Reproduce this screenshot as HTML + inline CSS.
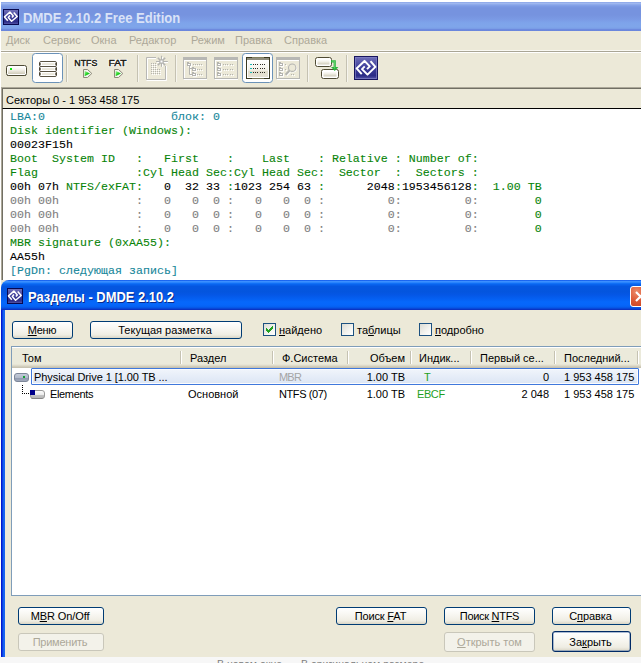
<!DOCTYPE html>
<html>
<head>
<meta charset="utf-8">
<title>DMDE</title>
<style>
html,body{margin:0;padding:0;}html{overflow:hidden;width:641px;height:663px;}
body{width:641px;height:663px;overflow:hidden;background:#fff;position:relative;font-family:"Liberation Sans",sans-serif;font-size:11px;color:#000;}
.abs{position:absolute;}
.t{position:absolute;white-space:nowrap;line-height:13px;font-size:11px;}
u{text-decoration:underline;text-underline-offset:1px;}
/* main window */
#mtitle{left:1px;top:2px;width:640px;height:29px;background:linear-gradient(to bottom,#8aa5e8 0,#9fb7ef 1.5px,#8eaaeb 2.5px,#7d9be5 4px,#7693df 6px,#7693df 13px,#7a99e4 17px,#7ea4ea 21px,#7fa6ea 25px,#7a9de6 26.5px,#6d8ade 27.5px,#6985dc 29px);}
#mtitle .txt{left:22px;top:8px;font-size:14px;line-height:16px;font-weight:bold;color:#d9e2f7;white-space:nowrap;transform:scaleX(0.931);transform-origin:0 0;}
#menubar{left:1px;top:31px;width:640px;height:20px;background:#ece9d8;}
.mi{position:absolute;top:3px;font-size:11px;line-height:13px;color:#aca899;white-space:nowrap;}
#tb{left:1px;top:52px;width:640px;height:35px;background:#ece9d8;border-top:1px solid #fff;box-sizing:border-box;}
.sep{position:absolute;top:55px;width:1px;height:27px;background:#c5c2b2;box-shadow:1px 0 0 #f6f5ee;}
.selbtn{position:absolute;top:53px;height:30px;box-sizing:border-box;border:1px solid #6b92b8;border-radius:3.5px;background:#fff;}
/* status */
#st{left:1px;top:87px;width:640px;height:22px;background:#ece9d8;box-sizing:border-box;border-top:1px solid #aca899;border-left:1px solid #aca899;}
#st .in{position:absolute;left:0;top:0;right:0;bottom:0;border-top:1px solid #716f64;border-left:1px solid #716f64;border-bottom:1px solid #000;}
#ed{left:1px;top:109px;width:640px;height:172px;background:#fff;box-sizing:border-box;border-left:1px solid #aca899;}
#ed .in{position:absolute;left:0;top:0;bottom:0;width:1px;background:#716f64;}
pre{margin:0;position:absolute;left:10px;top:110px;font-family:"Liberation Mono",monospace;font-size:11.6px;line-height:14px;letter-spacing:0.04px;color:#000;-webkit-text-stroke:0.1px currentColor;}
.g{color:#088408;}
.c{color:#16879a;}
.y{color:#808080;}
/* dialog */
#dlg{left:1px;top:280px;width:660px;height:377px;background:#ece9d8;}
#dtitle{left:0;top:0;width:660px;height:30px;border-radius:8px 8px 0 0;background:linear-gradient(to bottom,#0a52ea 0,#3b8fff 1.5px,#2a84fc 2.5px,#1070f6 3.5px,#0863ee 4.5px,#0456e0 6.5px,#0455de 12px,#0557e6 15px,#0560f2 19px,#0668fb 22px,#0666fa 25px,#0560f0 27px,#0848d8 28.5px,#0a34c4 29.5px,#0a30c0 30px);}
#dtitle .txt{left:27px;top:9px;font-size:14px;line-height:16px;font-weight:bold;color:#fff;white-space:nowrap;text-shadow:1px 1px 0 #0a2a8c;transform:scaleX(0.923);transform-origin:0 0;}
#dl{left:0;top:30px;width:4px;height:347px;background:linear-gradient(to right,#0019cf 0,#0019cf 1px,#0a3ee2 1.5px,#1560f0 2.5px,#1a66f2 4px);}
.btn{position:absolute;box-sizing:border-box;border:1px solid #003c74;border-radius:3px;background:linear-gradient(to bottom,#ffffff 0,#f8f7f2 40%,#efede3 80%,#d9d5c6 100%);text-align:center;font-size:11px;line-height:13px;color:#000;white-space:nowrap;}
.btn span{position:relative;display:inline-block;}
.btn.dis{border-color:#c9c7ba;background:#f3f2ea;color:#aca899;}
.btn.def{border-color:#002a66;box-shadow:inset 0 0 0 0.5px #5a7aa8;}
.cb{position:absolute;width:13px;height:13px;box-sizing:border-box;border:1px solid #1c5180;background:linear-gradient(135deg,#dcdcd4 0,#f4f4f0 60%,#fff 100%);}
#lv{left:10px;top:66px;width:650px;height:250px;background:#fff;box-sizing:border-box;border:1px solid #7f9db9;}
#lh{left:0;top:0;width:648px;height:21px;background:linear-gradient(to bottom,#fff 0,#fff 1px,#ebeadb 1px,#ebeadb 17px,#e3e0d0 18px,#d8d4c3 19px,#cbc7b6 20px,#c4c0ae 21px);}
.hs{position:absolute;top:4px;width:1px;height:13px;background:#c5c2b2;border-right:1px solid #fff;}
.ht{position:absolute;top:5px;font-size:11px;line-height:13px;white-space:nowrap;}
.ct{position:absolute;font-size:11px;line-height:13px;white-space:nowrap;}
#bot{left:0;top:657px;width:641px;height:6px;background:#f7f7f7;overflow:hidden;}
</style>
</head>
<body>
<!-- main window -->
<div id="mtitle" class="abs"><div class="abs txt">DMDE 2.10.2 Free Edition</div></div>
<div id="menubar" class="abs">
<span class="mi" style="left:5px">Диск</span>
<span class="mi" style="left:42px">Сервис</span>
<span class="mi" style="left:90px">Окна</span>
<span class="mi" style="left:128px">Редактор</span>
<span class="mi" style="left:190px">Режим</span>
<span class="mi" style="left:234px">Правка</span>
<span class="mi" style="left:283px">Справка</span>
</div>
<div class="abs" style="left:1px;top:50px;width:640px;height:1px;background:#f9f8f2"></div><div class="abs" style="left:1px;top:51px;width:640px;height:1px;background:#a9a595"></div>
<div id="tb" class="abs"></div>
<div class="selbtn" style="left:32px;width:31px"></div><div class="selbtn" style="left:242px;width:31px"></div>
<i class="sep" style="left:66px"></i><i class="sep" style="left:137px"></i><i class="sep" style="left:175px"></i><i class="sep" style="left:307px"></i><i class="sep" style="left:346px"></i>
<svg class="abs" style="left:0;top:0" width="641" height="100" viewBox="0 0 641 100">
<defs>
<linearGradient id="gd" x1="0" y1="0" x2="0" y2="1"><stop offset="0" stop-color="#ffffff"/><stop offset="0.45" stop-color="#f1efe6"/><stop offset="1" stop-color="#cfcbb9"/></linearGradient>
<linearGradient id="gl" x1="0" y1="0" x2="0" y2="1"><stop offset="0" stop-color="#6e6eb8"/><stop offset="0.5" stop-color="#3c3c98"/><stop offset="0.85" stop-color="#2b2b86"/><stop offset="1" stop-color="#5656a8"/></linearGradient>
<linearGradient id="gg" x1="0" y1="0" x2="1" y2="1"><stop offset="0" stop-color="#b8f5b0"/><stop offset="0.5" stop-color="#22d422"/><stop offset="1" stop-color="#0a9a0a"/></linearGradient>
<linearGradient id="gh" x1="0" y1="0" x2="1" y2="0"><stop offset="0" stop-color="#3f3d28"/><stop offset="0.5" stop-color="#a5a188"/><stop offset="1" stop-color="#3f3d28"/></linearGradient>
<g id="logo"><rect x="0" y="0" width="24" height="24" fill="#17155f"/><rect x="1" y="1" width="22" height="22" fill="url(#gl)"/><rect x="1.5" y="1.5" width="21" height="21" fill="none" stroke="#8080c4" stroke-width="1" opacity="0.7"/><path d="M7.75 18.2 L2.6 12.4 L10.5 4.9 L15.75 10.4 L13 13.15 M16.5 5.15 L21.4 10.9 L13.5 18.65 L8 13.15 L10.75 10.4" fill="none" stroke="#fff" stroke-width="2" stroke-linejoin="round"/></g>
<g id="logo16"><rect x="0" y="0" width="16" height="16" fill="#08084e"/><rect x="1" y="1" width="14" height="14" fill="url(#gl)"/><path d="M4.8 11.7 L1.5 7.9 L6.9 3.1 L10.3 6.9 L8.9 8.5 M10.7 3.4 L14.2 7.5 L8.6 12.3 L5.3 8.5 L6.9 6.6" fill="none" stroke="#fff" stroke-width="1.5" stroke-linejoin="round"/></g>
<g id="play"><path d="M0.5 0.5 H4.5 L8.8 4.5 L4.5 8.5 H0.5 Z" fill="#f4f4ee" stroke="#8c8a78" stroke-width="1"/><path d="M1.6 1.8 L7 4.5 L1.6 7.3 Z" fill="url(#gg)"/></g>
</defs>
<!-- drive icon -->
<rect x="6.5" y="65.5" width="20" height="10" rx="2" fill="#fff" stroke="#4d4a34" stroke-width="1"/>
<rect x="8" y="67" width="17" height="7" fill="url(#gd)"/>
<rect x="7" y="75" width="19" height="1" fill="#4d4a34" opacity="0.6"/>
<rect x="10" y="68" width="2" height="2" fill="#10e810"/>
<!-- disk stack -->
<g fill="#fff" stroke="#5a5343" stroke-width="1"><rect x="39.5" y="61.5" width="17" height="5" rx="1.5"/><rect x="39.5" y="66.5" width="17" height="5" rx="1.5"/><rect x="39.5" y="71.5" width="17" height="5" rx="1.5"/></g>
<g stroke="#4a4333" stroke-width="1.6"><path d="M39.9 63v2M39.9 68v2M39.9 73v2M56.1 63v2M56.1 68v2M56.1 73v2"/></g>
<g fill="#e4e0d0"><rect x="42" y="63.3" width="12.5" height="1.5"/><rect x="42" y="68.3" width="12.5" height="1.5"/><rect x="42" y="73.3" width="12.5" height="1.5"/></g>
<!-- NTFS / FAT -->
<g font-family="Liberation Sans, sans-serif" font-size="9.3" fill="#fff" stroke="#fff" stroke-width="2" stroke-opacity="0.8" stroke-linejoin="round"><text x="74.3" y="66" textLength="23" lengthAdjust="spacingAndGlyphs">NTFS</text><text x="108.6" y="66" textLength="18" lengthAdjust="spacingAndGlyphs">FAT</text></g>
<g font-family="Liberation Sans, sans-serif" font-size="9.3" fill="#1c1b12" stroke="#1c1b12" stroke-width="0.45"><text x="74.3" y="66" textLength="23" lengthAdjust="spacingAndGlyphs">NTFS</text><text x="108.6" y="66" textLength="18" lengthAdjust="spacingAndGlyphs">FAT</text></g>
<use href="#play" x="83" y="69"/><use href="#play" x="114" y="69"/>
<!-- grid/star disabled -->
<g fill="none" stroke="#fff" stroke-width="1"><path d="M156 58.5 H147.5 V79 M146.5 80.5 H166.5 V66"/></g>
<g fill="none" stroke="#b7b7b4" stroke-width="1"><path d="M156 57.5 H146.5 V79.5 H165.5 V66"/></g>
<g stroke="#fff" stroke-width="1"><path d="M162.5 57v10M157 62.5h11M158.6 58.3l7 7"/></g>
<g stroke="#b4b4b0" stroke-width="1.1"><path d="M161.5 55.8v11M156 61.5h11.8"/><path d="M157.8 57.8l7.4 7.4M165.2 57.8l-7.4 7.4" stroke-width="1.6"/></g>
<rect x="160" y="60" width="3" height="3" fill="#fff" stroke="#b4b4b0" stroke-width="1"/>
<g fill="#fff" transform="translate(1,1)"><rect x="151" y="63" width="1" height="1"/><rect x="153" y="63" width="1" height="1"/><rect x="155" y="63" width="1" height="1"/><rect x="151" y="65" width="1" height="1"/><rect x="153" y="65" width="1" height="1"/><rect x="155" y="65" width="1" height="1"/><rect x="151" y="67" width="1" height="1"/><rect x="153" y="67" width="1" height="1"/><rect x="155" y="67" width="1" height="1"/><rect x="151" y="69" width="1" height="1"/><rect x="153" y="69" width="1" height="1"/><rect x="155" y="69" width="1" height="1"/><rect x="157" y="69" width="1" height="1"/><rect x="159" y="69" width="1" height="1"/><rect x="151" y="71" width="1" height="1"/><rect x="153" y="71" width="1" height="1"/><rect x="155" y="71" width="1" height="1"/><rect x="157" y="71" width="1" height="1"/><rect x="159" y="71" width="1" height="1"/><rect x="151" y="73" width="1" height="1"/><rect x="153" y="73" width="1" height="1"/><rect x="155" y="73" width="1" height="1"/><rect x="157" y="73" width="1" height="1"/><rect x="159" y="73" width="1" height="1"/></g>
<g fill="#b4b4b0"><rect x="151" y="63" width="1" height="1"/><rect x="153" y="63" width="1" height="1"/><rect x="155" y="63" width="1" height="1"/><rect x="151" y="65" width="1" height="1"/><rect x="153" y="65" width="1" height="1"/><rect x="155" y="65" width="1" height="1"/><rect x="151" y="67" width="1" height="1"/><rect x="153" y="67" width="1" height="1"/><rect x="155" y="67" width="1" height="1"/><rect x="151" y="69" width="1" height="1"/><rect x="153" y="69" width="1" height="1"/><rect x="155" y="69" width="1" height="1"/><rect x="157" y="69" width="1" height="1"/><rect x="159" y="69" width="1" height="1"/><rect x="151" y="71" width="1" height="1"/><rect x="153" y="71" width="1" height="1"/><rect x="155" y="71" width="1" height="1"/><rect x="157" y="71" width="1" height="1"/><rect x="159" y="71" width="1" height="1"/><rect x="151" y="73" width="1" height="1"/><rect x="153" y="73" width="1" height="1"/><rect x="155" y="73" width="1" height="1"/><rect x="157" y="73" width="1" height="1"/><rect x="159" y="73" width="1" height="1"/></g>
<!-- tree disabled -->
<g id="frm"><rect x="184.5" y="60.5" width="22" height="19" fill="none" stroke="#fff" stroke-width="1"/><rect x="183.5" y="57.5" width="23" height="21" fill="none" stroke="#b7b7b4" stroke-width="1"/><rect x="183" y="57" width="24" height="3" fill="#b7b7b4"/></g>
<g id="fld"><path d="M191.5 63.5v3.2h-3.5" fill="none" stroke="#fff" stroke-width="1"/><rect x="187.5" y="63.5" width="3" height="2" fill="#fff" stroke="#b4b4b0" stroke-width="1"/><rect x="187" y="62" width="2" height="1" fill="#b4b4b0"/></g>
<path d="M190.5 67v8.5h2" stroke="#fff" stroke-width="1" fill="none"/>
<path d="M189.5 66v8.5h2.5M189.5 68.5h2.5" fill="none" stroke="#b4b4b0" stroke-width="1"/>
<use href="#fld" x="5" y="5"/><use href="#fld" x="5" y="10"/>
<g fill="#fff" transform="translate(1,1)"><rect x="193" y="64" width="1" height="1"/><rect x="195" y="64" width="1" height="1"/><rect x="197" y="64" width="1" height="1"/><rect x="199" y="64" width="1" height="1"/><rect x="201" y="64" width="1" height="1"/><rect x="197" y="69" width="1" height="1"/><rect x="199" y="69" width="1" height="1"/><rect x="201" y="69" width="1" height="1"/><rect x="197" y="74" width="1" height="1"/><rect x="199" y="74" width="1" height="1"/><rect x="201" y="74" width="1" height="1"/></g><g fill="#b4b4b0"><rect x="193" y="64" width="1" height="1"/><rect x="195" y="64" width="1" height="1"/><rect x="197" y="64" width="1" height="1"/><rect x="199" y="64" width="1" height="1"/><rect x="201" y="64" width="1" height="1"/><rect x="197" y="69" width="1" height="1"/><rect x="199" y="69" width="1" height="1"/><rect x="201" y="69" width="1" height="1"/><rect x="197" y="74" width="1" height="1"/><rect x="199" y="74" width="1" height="1"/><rect x="201" y="74" width="1" height="1"/></g>
<!-- list disabled -->
<use href="#frm" x="31" y="0"/>
<use href="#fld" x="30" y="0"/><use href="#fld" x="30" y="5"/><use href="#fld" x="30" y="10"/>
<g fill="#fff" transform="translate(1,1)"><rect x="223" y="64" width="1" height="1"/><rect x="225" y="64" width="1" height="1"/><rect x="227" y="64" width="1" height="1"/><rect x="230" y="64" width="1" height="1"/><rect x="232" y="64" width="1" height="1"/><rect x="223" y="69" width="1" height="1"/><rect x="225" y="69" width="1" height="1"/><rect x="227" y="69" width="1" height="1"/><rect x="230" y="69" width="1" height="1"/><rect x="232" y="69" width="1" height="1"/><rect x="223" y="74" width="1" height="1"/><rect x="225" y="74" width="1" height="1"/><rect x="227" y="74" width="1" height="1"/><rect x="230" y="74" width="1" height="1"/><rect x="232" y="74" width="1" height="1"/></g><g fill="#b4b4b0"><rect x="223" y="64" width="1" height="1"/><rect x="225" y="64" width="1" height="1"/><rect x="227" y="64" width="1" height="1"/><rect x="230" y="64" width="1" height="1"/><rect x="232" y="64" width="1" height="1"/><rect x="223" y="69" width="1" height="1"/><rect x="225" y="69" width="1" height="1"/><rect x="227" y="69" width="1" height="1"/><rect x="230" y="69" width="1" height="1"/><rect x="232" y="69" width="1" height="1"/><rect x="223" y="74" width="1" height="1"/><rect x="225" y="74" width="1" height="1"/><rect x="227" y="74" width="1" height="1"/><rect x="230" y="74" width="1" height="1"/><rect x="232" y="74" width="1" height="1"/></g>
<!-- view icon (selected) -->
<linearGradient id="gv" x1="0" y1="0" x2="0" y2="1"><stop offset="0" stop-color="#ffffff"/><stop offset="0.5" stop-color="#f6f4ec"/><stop offset="0.62" stop-color="#efece0"/><stop offset="0.66" stop-color="#e3dfcd"/><stop offset="1" stop-color="#e6e2d2"/></linearGradient>
<rect x="246.5" y="57.5" width="23" height="21" fill="#fff" stroke="#3b3a22" stroke-width="1"/>
<rect x="248" y="60" width="20" height="17" fill="url(#gv)"/>
<rect x="247" y="58" width="22" height="2" fill="#8f8d7c"/>
<rect x="252" y="57" width="12" height="1" fill="#8a8866" opacity="0.9"/><rect x="252" y="78" width="12" height="1" fill="#8a8866" opacity="0.7"/>
<g fill="#19b9b4"><rect x="250" y="64" width="2" height="1"/><rect x="250" y="68" width="2" height="1"/><rect x="250" y="72" width="2" height="1"/></g>
<g stroke="#2e2b24" stroke-width="1" stroke-dasharray="1 1"><path d="M253 64.5h5M260 64.5h5M253 68.5h5M260 68.5h5M253 72.5h5M260 72.5h5"/></g>
<!-- magnifier disabled -->
<use href="#frm" x="93" y="0"/>
<use href="#fld" x="92" y="0"/><use href="#fld" x="92" y="5"/><use href="#fld" x="92" y="10"/>
<g fill="#fff" transform="translate(1,1)"><rect x="285" y="64" width="1" height="1"/><rect x="285" y="69" width="1" height="1"/><rect x="291" y="74" width="1" height="1"/><rect x="293" y="74" width="1" height="1"/></g><g fill="#b4b4b0"><rect x="285" y="64" width="1" height="1"/><rect x="285" y="69" width="1" height="1"/><rect x="291" y="74" width="1" height="1"/><rect x="293" y="74" width="1" height="1"/></g>
<circle cx="293" cy="68.5" r="3.7" fill="none" stroke="#fff" stroke-width="1"/>
<circle cx="292.2" cy="67.7" r="3.7" fill="#ece9d8" stroke="#b4b4b0" stroke-width="1.1"/>
<path d="M290.3 71.7L286.6 75.6" stroke="#fff" stroke-width="1.6"/>
<path d="M289.4 70.8L285.6 74.8" stroke="#b4b4b0" stroke-width="2"/>
<!-- copy icon -->
<linearGradient id="go" x1="0" y1="0" x2="1" y2="0"><stop offset="0" stop-color="#4a4630"/><stop offset="0.5" stop-color="#8a8468"/><stop offset="1" stop-color="#4a4630"/></linearGradient>
<rect x="315.5" y="57.5" width="16" height="9" rx="2" fill="#fff" stroke="#4f4b34" stroke-width="1"/>
<rect x="317.5" y="59.5" width="12" height="5" fill="url(#gd)"/>
<rect x="321.5" y="69.5" width="17" height="9" rx="2" fill="#fff" stroke="#4f4b34" stroke-width="1"/>
<rect x="323.5" y="71.5" width="13" height="5" fill="url(#gd)"/>
<path d="M331 61.4 H334.7 V67.5" fill="none" stroke="#2cb53c" stroke-width="2.2"/><path d="M331 67 h7.4 l-3.7 3.9z" fill="#2cb53c"/>
<path d="M332 61.2 H334.6 V68.5" fill="none" stroke="#7fe08a" stroke-width="0.7" opacity="0.8"/>
<!-- logo -->
<use href="#logo" x="354" y="56"/>
<use href="#logo16" x="3" y="9"/>
</svg>
<div id="st" class="abs"><div class="in"></div><div class="t" style="left:4px;top:6px">Секторы 0 - 1 953 458 175</div></div>
<div id="ed" class="abs"><div class="in"></div></div>
<pre><span class="c">LBA:0                  блок: 0</span>
<span class="g">Disk identifier (Windows):</span>
00023F15h
<span class="g">Boot  System ID   :   First    :    Last    : Relative : Number of:</span>
<span class="g">Flag              :Cyl Head Sec:Cyl Head Sec:  Sector  :  Sectors :</span>
00h 07h<span class="g"> NTFS/exFAT:</span>   0  32 33 <span class="g">:</span>1023 254 63 <span class="g">:</span>      2048<span class="g">:</span>1953456128<span class="g">:  1.00 TB</span>
<span class="y">00h 00h           :   0   0  0 :   0   0  0 :         0:         0:</span><span class="g">        0</span>
<span class="y">00h 00h           :   0   0  0 :   0   0  0 :         0:         0:</span><span class="g">        0</span>
<span class="y">00h 00h           :   0   0  0 :   0   0  0 :         0:         0:</span><span class="g">        0</span>
<span class="g">MBR signature (0xAA55):</span>
AA55h
<span class="c">[PgDn: следующая запись]</span></pre>

<!-- dialog -->
<div id="dlg" class="abs">
 <div id="dtitle" class="abs"><svg class="abs" style="left:6px;top:8px" width="16" height="16" viewBox="0 0 16 16"><use href="#logo16"/></svg><div class="abs txt">Разделы - DMDE 2.10.2</div>
  <div class="abs" id="xb" style="left:629px;top:6px;width:21px;height:21px;box-sizing:border-box;border:1px solid #fff;border-radius:3px;background:radial-gradient(circle at 30% 25%,#ec8c6c 0,#dd5a36 45%,#c43c1a 100%);"></div>
  <svg class="abs" style="left:629px;top:6px" width="21" height="21" viewBox="0 0 21 21"><path d="M6 6l9 9M15 6l-9 9" stroke="#fff" stroke-width="2.2" stroke-linecap="butt"/></svg></div>
 <div id="dl" class="abs"></div>
 <div class="btn" style="left:11px;top:41px;width:61px;height:18px;"><span style="top:2px;left:-0.5px;letter-spacing:-0.3px"><u>М</u>еню</span></div>
 <div class="btn" style="left:89px;top:41px;width:152px;height:18px;"><span style="top:2px;left:-1px">Текущая разметка</span></div>
 <div class="cb" style="left:262px;top:43px"><svg style="position:absolute;left:2px;top:2px" width="7" height="7" viewBox="0 0 7 7" shape-rendering="crispEdges"><path d="M0 2h1v3h-1zM1 3h1v3h-1zM2 4h1v3h-1zM3 3h1v3h-1zM4 2h1v3h-1zM5 1h1v3h-1zM6 0h1v3h-1z" fill="#21a121"/></svg></div><div class="t" style="left:278px;top:44px"><u>н</u>айдено</div>
 <div class="cb" style="left:340px;top:43px"></div><div class="t" style="left:356px;top:44px">та<u>б</u>лицы</div>
 <div class="cb" style="left:418px;top:43px"></div><div class="t" style="left:434px;top:44px"><u>п</u>одробно</div>
 <div id="lv" class="abs">
  <div id="lh" class="abs">
   <span class="ht" style="left:10px">Том</span>
   <span class="ht" style="left:178px">Раздел</span>
   <span class="ht" style="left:270px">Ф.Система</span>
   <span class="ht" style="right:255px">Объем</span>
   <span class="ht" style="left:407px">Индик...</span>
   <span class="ht" style="left:468px">Первый се...</span>
   <span class="ht" style="left:552px">Последний...</span>
   <i class="hs" style="left:168px"></i><i class="hs" style="left:260px"></i><i class="hs" style="left:335px"></i><i class="hs" style="left:398px"></i><i class="hs" style="left:458px"></i><i class="hs" style="left:542px"></i><i class="hs" style="left:625px"></i>
  </div>
  <!-- row 1 -->
  <div class="abs" id="sel" style="left:19px;top:21px;width:608px;height:17px;box-sizing:border-box;border:1px solid #3f78dc;border-radius:1px;background:linear-gradient(to bottom,#f1f5fb 0,#e6edf8 50%,#dbe5f4 100%);box-shadow:inset 0 0 0 1px #fbfcfe;"></div>
  <svg class="abs" style="left:0;top:20px" width="40" height="36" viewBox="0 20 40 36">
   <defs><linearGradient id="gdr" x1="0" y1="0" x2="0" y2="1"><stop offset="0" stop-color="#c6cddb"/><stop offset="0.5" stop-color="#b2bbcb"/><stop offset="0.62" stop-color="#929cb1"/><stop offset="1" stop-color="#a4adbf"/></linearGradient>
   <linearGradient id="gpr" x1="0" y1="0" x2="0" y2="1"><stop offset="0" stop-color="#ffffff"/><stop offset="0.5" stop-color="#ececec"/><stop offset="0.6" stop-color="#c4c4c4"/><stop offset="1" stop-color="#b4b4b4"/></linearGradient></defs>
   <rect x="2.5" y="26.5" width="14" height="8" rx="2.5" fill="url(#gdr)" stroke="#7d8799" stroke-width="1"/>
   <rect x="11" y="29" width="2" height="2" fill="#12a032"/>
   <g fill="#000" shape-rendering="crispEdges"><rect x="10" y="38" width="1" height="1"/><rect x="10" y="40" width="1" height="1"/><rect x="10" y="42" width="1" height="1"/><rect x="10" y="44" width="1" height="1"/><rect x="10" y="46" width="1" height="1"/><rect x="12" y="46" width="1" height="1"/><rect x="14" y="46" width="1" height="1"/><rect x="16" y="46" width="1" height="1"/></g>
   <path d="M18.5 43.5 H30 Q32.5 43.5 32.5 46 V49 Q32.5 51.5 30 51.5 H21 Q18.5 51.5 18.5 49 Z" fill="url(#gpr)" stroke="#9a9a9a" stroke-width="1"/>
   <path d="M19.5 51.5 H30.5" stroke="#868686" stroke-width="1"/>
   <rect x="18" y="43" width="5" height="5" fill="#00008b" shape-rendering="crispEdges"/>
  </svg>
  <span class="ct" style="left:22px;top:24px;letter-spacing:-0.07px">Physical Drive 1 [1.00 TB ...</span>
  <span class="ct" style="left:267px;top:24px;color:#a5a5a5;letter-spacing:-0.8px">MBR</span>
  <span class="ct" style="right:255px;top:24px">1.00 TB</span>
  <span class="ct" style="left:412px;top:24px;color:#1f9f1f">T</span>
  <span class="ct" style="right:111px;top:24px">0</span>
  <span class="ct" style="left:552px;top:24px">1 953 458 175</span>
  <!-- row 2 -->
  <span class="ct" style="left:38px;top:41px;letter-spacing:-0.35px">Elements</span>
  <span class="ct" style="left:176px;top:41px">Основной</span>
  <span class="ct" style="left:267px;top:41px;letter-spacing:-0.4px">NTFS (07)</span>
  <span class="ct" style="right:255px;top:41px">1.00 TB</span>
  <span class="ct" style="left:405px;top:41px;color:#1f9f1f;letter-spacing:-0.4px">EBCF</span>
  <span class="ct" style="right:111px;top:41px">2 048</span>
  <span class="ct" style="left:552px;top:41px">1 953 458 175</span>
 </div>
 <div class="btn" style="left:17px;top:327px;width:86px;height:18px;"><span style="top:2px;left:-1px;letter-spacing:-0.1px">M<u>B</u>R On/Off</span></div>
 <div class="btn dis" style="left:17px;top:353px;width:86px;height:18px;"><span style="top:2px;left:-1px;letter-spacing:-0.25px">Применить</span></div>
 <div class="btn" style="left:335px;top:327px;width:91px;height:18px;"><span style="top:2px;left:-1px;letter-spacing:-0.15px">Поиск <u>F</u>AT</span></div>
 <div class="btn" style="left:443px;top:327px;width:91px;height:18px;"><span style="top:2px;letter-spacing:-0.3px">Поиск <u>N</u>TFS</span></div>
 <div class="btn" style="left:551px;top:327px;width:79px;height:18px;"><span style="top:2px;left:-1px;letter-spacing:-0.1px">С<u>п</u>равка</span></div>
 <div class="btn dis" style="left:443px;top:352px;width:91px;height:20px;"><span style="top:3px"><u>О</u>ткрыть том</span></div>
 <div class="btn def" style="left:551px;top:351px;width:79px;height:21px;"><span style="top:4px;left:-1px">За<u>к</u>рыть</span></div>
</div>
<div id="bot" class="abs"><span class="abs" style="left:217px;top:0.5px;font-size:10.5px;line-height:12px;color:#808080;white-space:nowrap">В новом окне</span><span class="abs" style="left:301px;top:0.5px;font-size:10.5px;line-height:12px;color:#808080;white-space:nowrap">В оригинальном размере</span></div>
</body>
</html>
